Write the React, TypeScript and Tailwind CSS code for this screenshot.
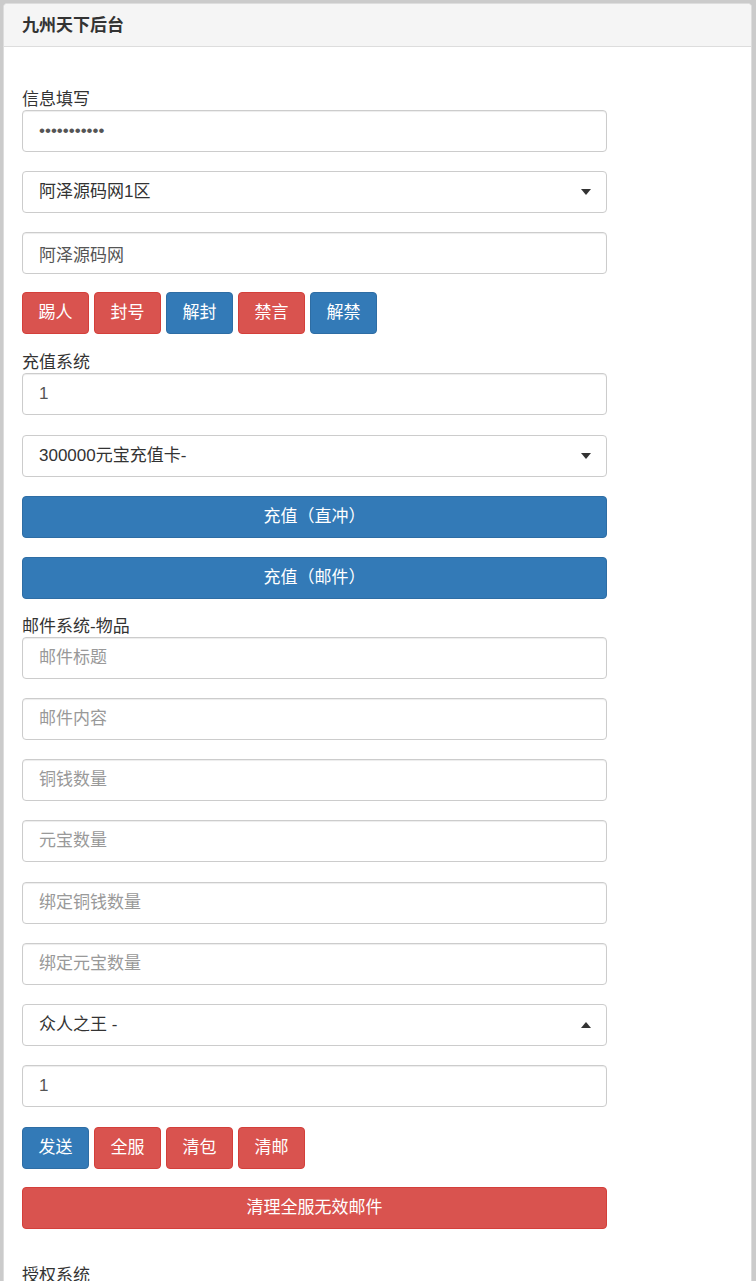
import React from "react";

const font = { fontFamily: '"Liberation Sans", "Noto Sans CJK SC", sans-serif' };

const inputCls =
  "block w-[585px] h-[42px] rounded-[4px] border border-[#ccc] bg-white px-[16px] text-[17px] text-[#555] placeholder:text-[#999] outline-none shadow-[inset_0_1px_1px_rgba(0,0,0,0.075)]";

function Field({ value, placeholder, type = "text", className = "mb-[19px]" }: { value?: string; placeholder?: string; type?: string; className?: string }) {
  return <input type={type} readOnly defaultValue={value} placeholder={placeholder} className={`${inputCls} ${className}`} />;
}

function Select({ label, up = false }: { label: string; up?: boolean }) {
  return (
    <div className="mb-[19px] flex h-[42px] w-[585px] items-center justify-between rounded-[4px] border border-[#ccc] bg-white pl-[16px] pr-[15px] text-[17px] text-[#333]">
      <span>{label}</span>
      <svg width="10" height="6" viewBox="0 0 10 6" className={up ? "rotate-180" : ""}>
        <path d="M0 0h10L5 6z" fill="#333" />
      </svg>
    </div>
  );
}

function Btn({ text, color }: { text: string; color: "red" | "blue" }) {
  const c = color === "red" ? "bg-[#d9534f] border-[#d43f3a]" : "bg-[#337ab7] border-[#2e6da4]";
  return <button className={`h-[42px] w-[67px] rounded-[4px] border text-[17px] text-white ${c}`}>{text}</button>;
}

function WideBtn({ text, color, className = "" }: { text: string; color: "red" | "blue"; className?: string }) {
  const c = color === "red" ? "bg-[#d9534f] border-[#d43f3a]" : "bg-[#337ab7] border-[#2e6da4]";
  return <button className={`block h-[42px] w-[585px] rounded-[4px] border text-[17px] text-white ${c} ${className}`}>{text}</button>;
}

function Label({ text }: { text: string }) {
  return <div className="h-[21px] text-[17px] leading-[21px] text-[#333]">{text}</div>;
}

export default function App() {
  return (
    <div className="min-h-[1281px] bg-[#cbcbcb] pl-[3px] pr-[4px] pt-[3px]" style={font}>
      <div className="min-h-[1278px] rounded-t-[4px] border border-[#ddd] bg-white">
        <div className="h-[43px] rounded-t-[4px] border-b border-[#ddd] bg-[#f5f5f5] pl-[18px] text-[17px] font-bold leading-[43px] text-[#333]">
          九州天下后台
        </div>
        <div className="pl-[18px] pt-[42px]">
          <Label text="信息填写" />
          <Field type="password" value="12345678901" />
          <Select label="阿泽源码网1区" />
          <Field value="阿泽源码网" className="mb-[18px]" />
          <div className="mb-[18px] flex gap-[5px]">
            <Btn text="踢人" color="red" />
            <Btn text="封号" color="red" />
            <Btn text="解封" color="blue" />
            <Btn text="禁言" color="red" />
            <Btn text="解禁" color="blue" />
          </div>
          <Label text="充值系统" />
          <Field value="1" className="mb-[20px]" />
          <Select label="300000元宝充值卡-" />
          <WideBtn text="充值（直冲）" color="blue" className="mb-[19px]" />
          <WideBtn text="充值（邮件）" color="blue" className="mb-[17px]" />
          <Label text="邮件系统-物品" />
          <Field placeholder="邮件标题" />
          <Field placeholder="邮件内容" />
          <Field placeholder="铜钱数量" />
          <Field placeholder="元宝数量" className="mb-[20px]" />
          <Field placeholder="绑定铜钱数量" />
          <Field placeholder="绑定元宝数量" />
          <Select label="众人之王 -" up />
          <Field value="1" className="mb-[20px]" />
          <div className="mb-[18px] flex gap-[5px]">
            <Btn text="发送" color="blue" />
            <Btn text="全服" color="red" />
            <Btn text="清包" color="red" />
            <Btn text="清邮" color="red" />
          </div>
          <WideBtn text="清理全服无效邮件" color="red" className="mb-[36px]" />
          <Label text="授权系统" />
        </div>
      </div>
    </div>
  );
}
